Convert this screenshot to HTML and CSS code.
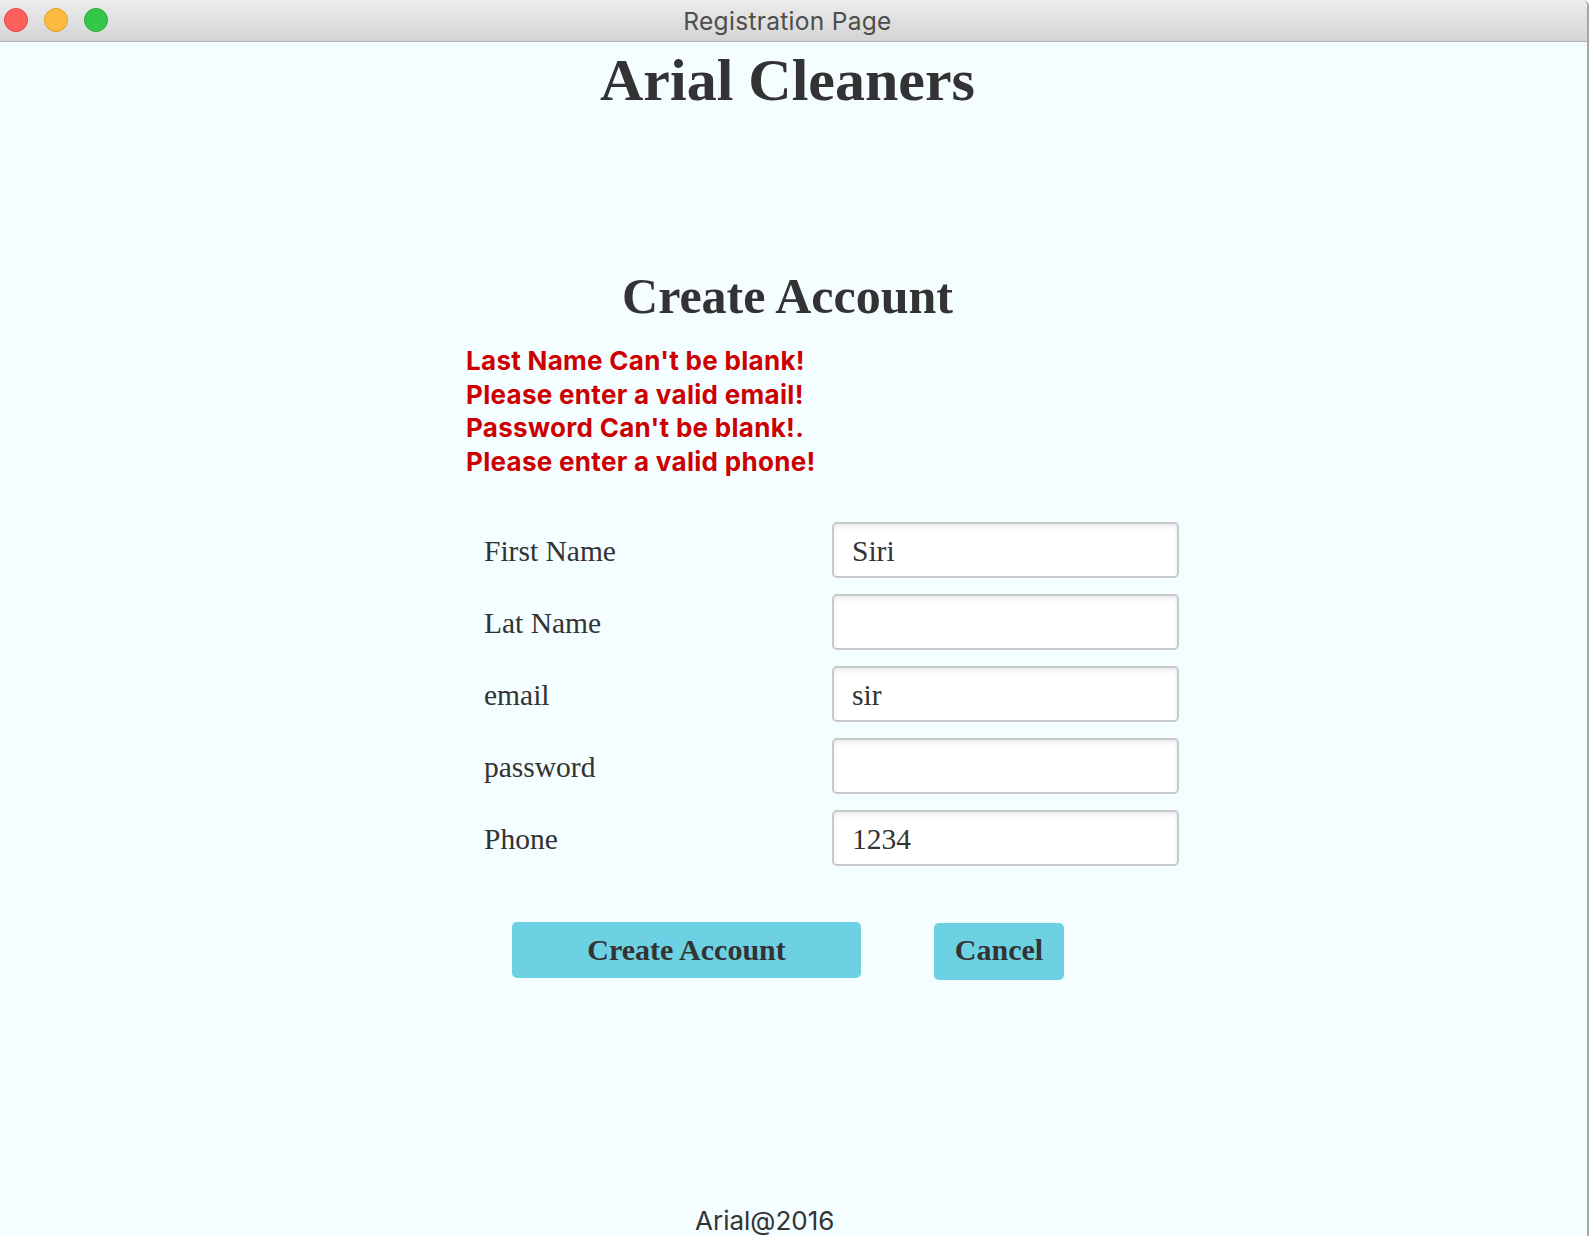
FILE: index.html
```html
<!DOCTYPE html>
<html>
<head>
<meta charset="utf-8">
<title>Registration Page</title>
<link rel="stylesheet" href="styles.css">
</head>
<body>
<div class="window">
  <div class="titlebar">
    <div class="lights">
      <span class="light red"></span>
      <span class="light yellow"></span>
      <span class="light green"></span>
    </div>
    <div class="title">Registration Page</div>
  </div>
  <div class="content">
    <h1 class="brand">Arial Cleaners</h1>
    <h2 class="heading">Create Account</h2>
    <div class="form-wrap">
      <ul class="errors">
        <li>Last Name Can't be blank!</li>
        <li>Please enter a valid email!</li>
        <li>Password Can't be blank!.</li>
        <li>Please enter a valid phone!</li>
      </ul>
      <div class="fields">
        <label class="label">First Name</label>
        <input class="field" type="text" value="Siri">
        <label class="label">Lat Name</label>
        <input class="field" type="text" value="">
        <label class="label">email</label>
        <input class="field" type="text" value="sir">
        <label class="label">password</label>
        <input class="field" type="password" value="">
        <label class="label">Phone</label>
        <input class="field" type="text" value="1234">
      </div>
      <div class="actions">
        <button class="btn btn-create">Create Account</button>
        <button class="btn btn-cancel">Cancel</button>
      </div>
    </div>
    <div class="footer">Arial@2016</div>
  </div>
</div>
</body>
</html>
```
FILE: styles.css
```css
* { box-sizing: border-box; }
html, body { margin: 0; padding: 0; background: #ffffff; }
body { width: 1590px; height: 1236px; overflow: hidden; }

.window {
  width: 1589px;
  height: 1236px;
  background: #f4fdff;
  border-right: 2px solid #a6a6a6;
  border-top-right-radius: 6px;
  overflow: hidden;
}

.titlebar {
  height: 42px;
  background: linear-gradient(#ececec, #d4d4d4);
  border-bottom: 1px solid #b3b3b3;
  display: flex;
  align-items: center;
  position: relative;
}
.lights {
  display: flex;
  gap: 16px;
  padding-left: 4px;
  position: absolute;
  left: 0;
  top: 8px;
}
.light {
  width: 24px;
  height: 24px;
  border-radius: 50%;
  display: block;
}
.red { background: #fc605b; border: 1px solid #e0443e; }
.yellow { background: #fdbc40; border: 1px solid #dea123; }
.green { background: #34c84a; border: 1px solid #27aa35; }
.title {
  width: 1575px;
  text-align: center;
  font-family: Inter, "Liberation Sans", sans-serif;
  font-size: 24.5px;
  letter-spacing: 0.3px;
  color: #4d4d4d;
  line-height: 40px;
}

.content {
  width: 1575px;
  font-family: "Liberation Serif", "Times New Roman", serif;
  color: #333333;
}

.brand {
  margin: 8px 0 0 0;
  font-size: 60px;
  line-height: 60px;
  font-weight: bold;
  text-align: center;
}
.heading {
  margin: 161px 0 0 0;
  font-size: 50px;
  line-height: 50px;
  font-weight: bold;
  text-align: center;
}

.form-wrap {
  margin-left: 466px;
  width: 713px;
}

.errors {
  list-style: none;
  margin: 23px 0 0 0;
  padding: 0;
  font-family: Inter, "Liberation Sans", sans-serif;
  font-weight: bold;
  font-size: 26px;
  letter-spacing: 0.3px;
  line-height: 33.7px;
  color: #cc0000;
}

.fields {
  margin-top: 43px;
  padding-left: 18px;
  display: grid;
  grid-template-columns: 348px 347px;
  grid-auto-rows: 56px;
  row-gap: 16px;
  align-items: center;
}
.label {
  font-size: 29.5px;
  color: #333333;
  padding-top: 3px;
}
.field {
  width: 347px;
  height: 56px;
  border: 2px solid #c8c8c8;
  border-radius: 5px;
  background: #ffffff;
  box-shadow: inset 0 3px 4px rgba(0, 0, 0, 0.08);
  padding: 4px 18px 0 18px;
  font-family: "Liberation Serif", "Times New Roman", serif;
  font-size: 29.5px;
  color: #333333;
  outline: none;
}

.actions {
  margin-top: 56px;
  margin-left: 46px;
  display: flex;
  align-items: flex-start;
  gap: 73px;
}
.btn {
  border: none;
  border-radius: 5px;
  background: #6dd1e4;
  font-family: "Liberation Serif", "Times New Roman", serif;
  font-weight: bold;
  font-size: 30px;
  color: #333333;
  padding: 0;
}
.btn-create { width: 349px; height: 56px; }
.btn-cancel { width: 130px; height: 57px; margin-top: 1px; padding-bottom: 3px; }

.footer {
  margin-top: 226px;
  padding-left: 695px;
  font-family: Inter, "Liberation Sans", sans-serif;
  font-size: 26px;
  line-height: 30px;
  color: #333333;
}
```
